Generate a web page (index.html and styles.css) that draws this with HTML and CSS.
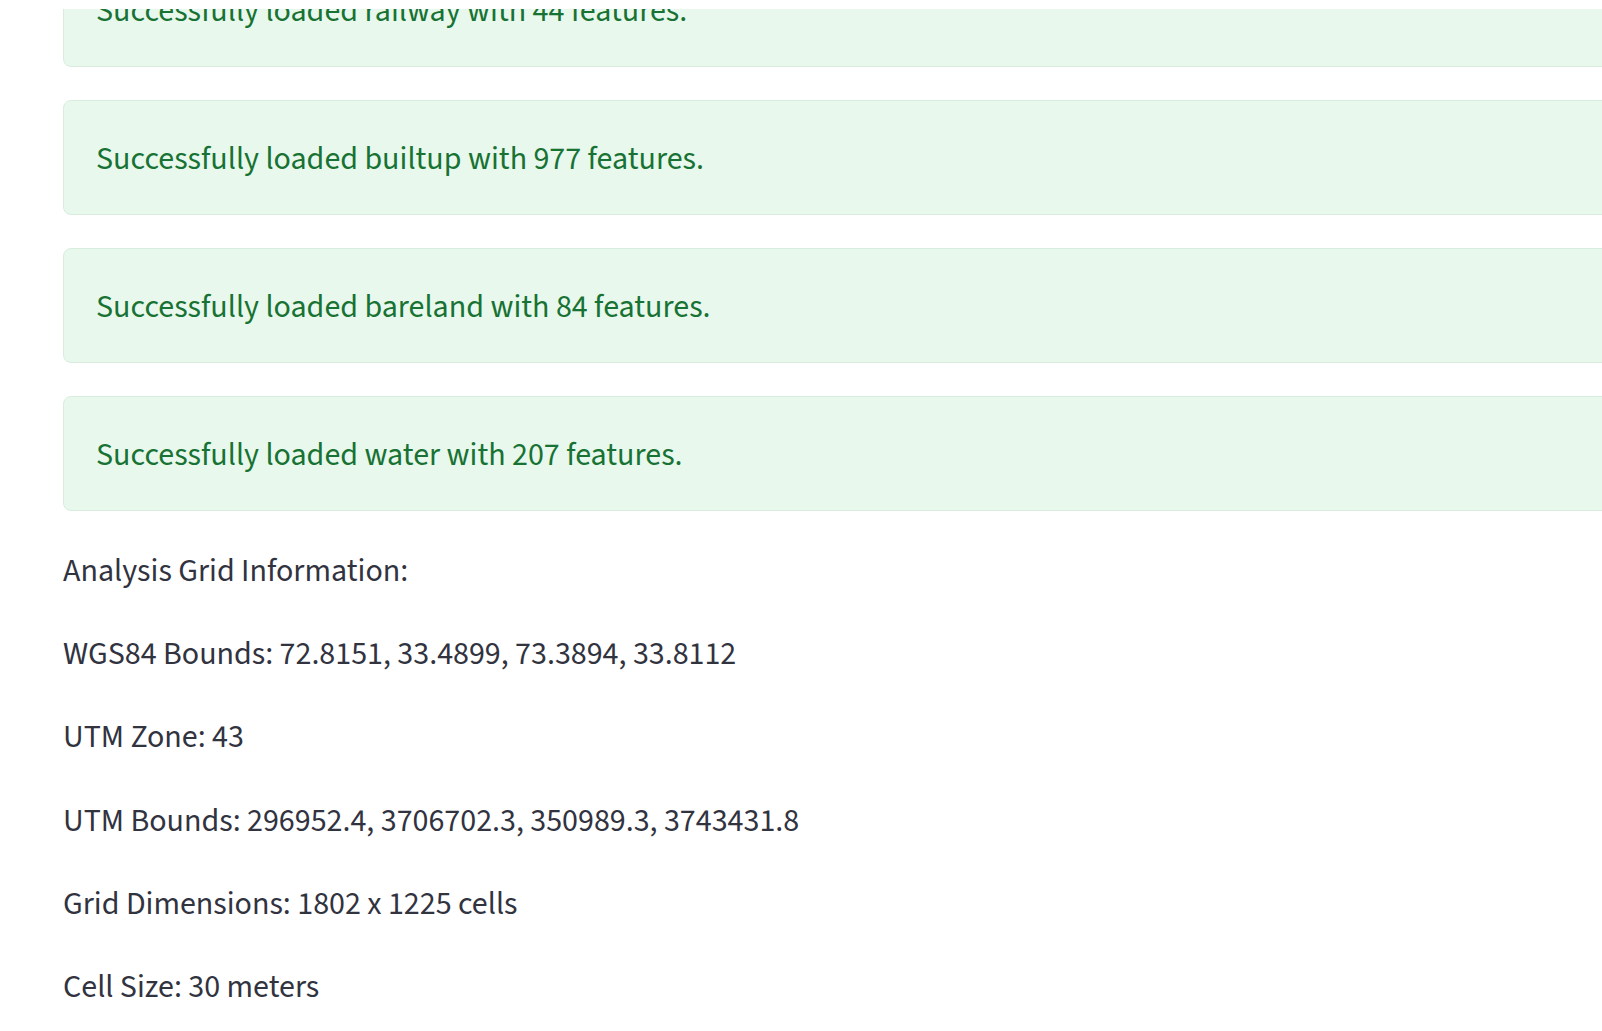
FILE: index.html
```html
<!DOCTYPE html>
<html lang="en">
<head>
<meta charset="utf-8">
<title>Analysis</title>
<link rel="stylesheet" href="styles.css">
</head>
<body>
<div class="topbar"></div>
<main class="main">
  <div class="block">
    <div class="alert alert-success">Successfully loaded railway with 44 features.</div>
    <div class="alert alert-success">Successfully loaded builtup with 977 features.</div>
    <div class="alert alert-success">Successfully loaded bareland with 84 features.</div>
    <div class="alert alert-success">Successfully loaded water with 207 features.</div>
    <div class="info">
      <p>Analysis Grid Information:</p>
      <p>WGS84 Bounds: 72.8151, 33.4899, 73.3894, 33.8112</p>
      <p>UTM Zone: 43</p>
      <p>UTM Bounds: 296952.4, 3706702.3, 350989.3, 3743431.8</p>
      <p>Grid Dimensions: 1802 x 1225 cells</p>
      <p>Cell Size: 30 meters</p>
    </div>
  </div>
</main>
</body>
</html>
```
FILE: styles.css
```css
html, body {
  margin: 0;
  padding: 0;
  background: #ffffff;
  overflow: hidden;
}

body {
  font-family: "Source Sans 3", "Source Sans Pro", "Lato", sans-serif;
  font-size: 32px;
  color: #31333f;
  width: 1602px;
  height: 1031px;
}

.topbar {
  position: fixed;
  top: 0;
  left: 0;
  right: 0;
  height: 9px;
  background: #ffffff;
  z-index: 10;
}

.main {
  margin-top: -48px;
  padding-left: 63px;
}

.block {
  width: 1640px;
  display: flex;
  flex-direction: column;
}

.alert {
  box-sizing: border-box;
  height: 115px;
  margin-bottom: 33px;
  padding: 4px 32px 0;
  display: flex;
  align-items: center;
  border-radius: 8px;
  line-height: 51.2px;
}

.alert-success {
  background: #e8f8ed;
  border: 1px solid #d9eddf;
  color: #177233;
}

.info {
  margin-top: 2px;
  display: flex;
  flex-direction: column;
  gap: 32px;
}

.info p {
  margin: 0;
  line-height: 51.2px;
  white-space: nowrap;
}
```
